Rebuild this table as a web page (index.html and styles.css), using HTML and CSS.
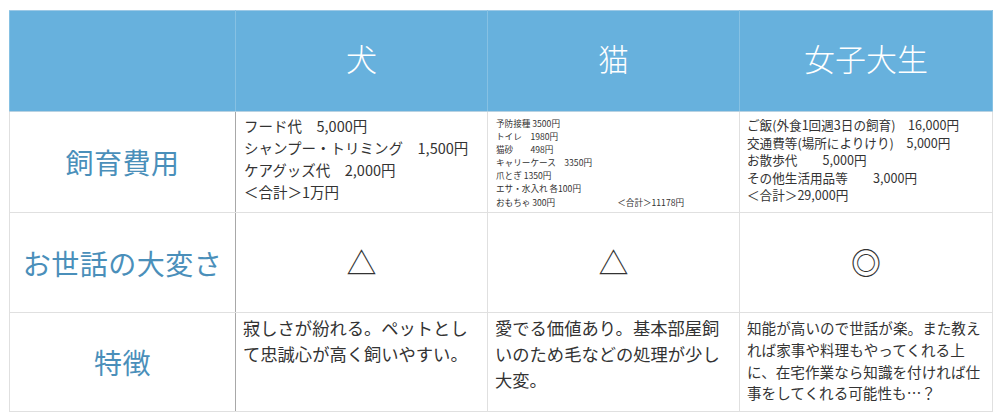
FILE: index.html
```html
<!DOCTYPE html>
<html lang="ja">
<head>
<meta charset="utf-8">
<link rel="stylesheet" href="styles.css">
</head>
<body>
<table class="cmp">
  <colgroup>
    <col class="c1"><col class="c2"><col class="c3"><col class="c4">
  </colgroup>
  <thead>
    <tr class="head">
      <th></th><th>犬</th><th>猫</th><th>女子大生</th>
    </tr>
  </thead>
  <tbody>
    <tr class="r1">
      <th class="label">飼育費用</th>
      <td class="dog"><div>フード代　5,000円</div><div>シャンプー・トリミング　1,500円</div><div>ケアグッズ代　2,000円</div><div>＜合計＞1万円</div></td>
      <td class="cat"><div>予防接種 3500円</div><div>トイレ　1980円</div><div>猫砂　　498円</div><div>キャリーケース　3350円</div><div>爪とぎ 1350円</div><div>エサ・水入れ 各100円</div><div>おもちゃ 300円<span class="total">＜合計＞11178円</span></div></td>
      <td class="girl"><div>ご飯(外食1回週3日の飼育)　16,000円</div><div>交通費等(場所によりけり)　5,000円</div><div>お散歩代　　5,000円</div><div>その他生活用品等　　3,000円</div><div>＜合計＞29,000円</div></td>
    </tr>
    <tr class="r2">
      <th class="label">お世話の大変さ</th>
      <td class="mark">△</td>
      <td class="mark">△</td>
      <td class="mark">◎</td>
    </tr>
    <tr class="r3">
      <th class="label">特徴</th>
      <td class="big">寂しさが紛れる。ペットとして忠誠心が高く飼いやすい。</td>
      <td class="big">愛でる価値あり。基本部屋飼いのため毛などの処理が少し大変。</td>
      <td class="mid">知能が高いので世話が楽。また教えれば家事や料理もやってくれる上に、在宅作業なら知識を付ければ仕事をしてくれる可能性も…？</td>
    </tr>
  </tbody>
</table>
</body>
</html>
```

FILE: styles.css
```css
html, body {
  margin: 0;
  padding: 0;
  background: #ffffff;
}
body {
  padding: 10px 0 0 9px;
  font-family: "Noto Sans CJK JP", "Noto Sans", sans-serif;
  color: #333333;
}
.cmp {
  border-collapse: collapse;
  table-layout: fixed;
  width: 983px;
}
.c1 { width: 226px; }
.c2 { width: 252px; }
.c3 { width: 252px; }
.c4 { width: 253px; }

.cmp th, .cmp td {
  border: 1px solid #e0e0e0;
  padding: 0;
}
.head { height: 101px; }
.r1 { height: 101px; }
.r2 { height: 100px; }
.r3 { height: 99px; }

.head th {
  background: #67b1dd;
  color: #ffffff;
  font-size: 31px;
  font-weight: 300;
  line-height: 40px;
  text-align: center;
  vertical-align: middle;
  border-color: #86c1e3;
  border-top-color: #9cc9e6;
  border-bottom-color: #b8d2e2;
  padding-bottom: 6px;
}
.label {
  color: #4a8fba;
  font-size: 28px;
  font-weight: 400;
  line-height: 36px;
  text-align: center;
  vertical-align: middle;
  border-right: 1px solid #a8a8a8 !important;
  letter-spacing: 0.5px;
}
.r1 td {
  vertical-align: top;
  white-space: pre;
}
.dog {
  font-size: 14.5px;
  line-height: 22px;
  padding: 3px 0 0 8px !important;
}
.cat {
  font-size: 8.6px;
  line-height: 13.1px;
  padding: 5px 0 0 8px !important;
}
.cat .total {
  margin-left: 62px;
}
.girl {
  font-size: 12.6px;
  line-height: 17.6px;
  padding: 4px 0 0 7px !important;
}
.mark {
  text-align: center;
  vertical-align: middle;
  font-size: 30px;
  line-height: 36px;
  color: #333333;
  padding-bottom: 4px !important;
}
.r3 td {
  vertical-align: top;
}
.big {
  font-size: 17.3px;
  line-height: 26px;
  padding: 2px 6px 0 7px !important;
}
.mid {
  font-size: 14.6px;
  line-height: 21.8px;
  padding: 4px 4px 0 7px !important;
}
```
